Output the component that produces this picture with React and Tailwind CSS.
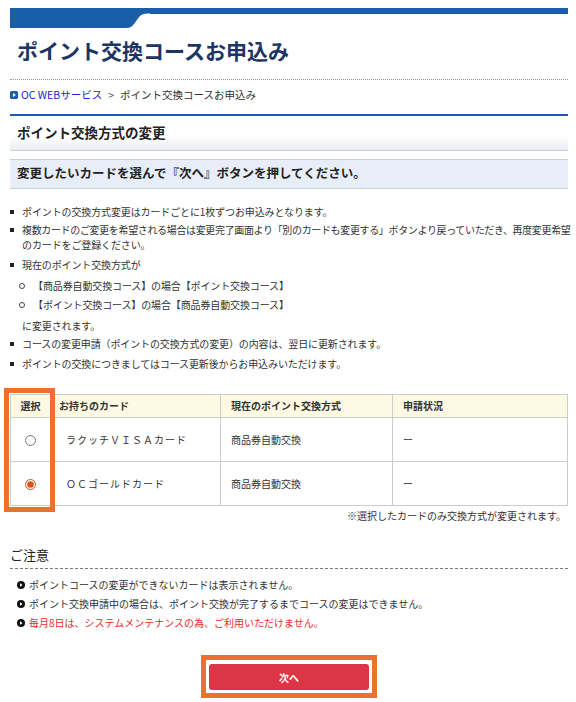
import React from 'react';

const notes = [
  'ポイントの交換方式変更はカードごとに1枚ずつお申込みとなります。',
];

const cards = [
  { name: 'ラクッチＶＩＳＡカード', course: '商品券自動交換', status: 'ー', checked: false },
  { name: 'ＯＣゴールドカード', course: '商品券自動交換', status: 'ー', checked: true },
];

const Square = () => <span className="w-[4px] h-[4px] bg-[#222] mt-[6px] mr-[8px] shrink-0" />;

const Ring = () => <span className="w-[6px] h-[6px] rounded-full border border-[#444] mt-[5px] ml-[9px] mr-[8px] shrink-0" />;

const ArrowDot = () => (
  <svg width="8" height="8" viewBox="0 0 8 8" className="shrink-0 mt-[4px] mr-[4px]">
    <circle cx="4" cy="4" r="4" fill="#111" />
    <path d="M3 2.2 L5.6 4 L3 5.8 Z" fill="#fff" />
  </svg>
);

const App = () => {
  return (
    <div className="w-[576px] bg-white pl-[10px] pr-[8px] text-[#333] font-['Noto_Sans_CJK_JP','Liberation_Sans',sans-serif]">
      {/* header bar */}
      <div className="flex items-start pt-[8px]">
        <svg width="140" height="20" viewBox="0 0 140 20" className="shrink-0 block">
          <path d="M0 0 H140 V5.5 H139 C134 5.5 132 6 129 9 L124 16 C121 19.5 120 20 115 20 H0 Z" fill="#1a5ea8" />
        </svg>
        <div className="flex-1 h-[5.5px] bg-[#1a5ea8]" />
      </div>

      <h1 className="mt-[7px] pl-[7px] h-[30px] leading-[30px] text-[21px] font-bold text-[#1c3563]">ポイント交換コースお申込み</h1>

      <div className="mt-[14px] border-t border-dotted border-[#999]" />

      <div className="pt-[7px] h-[23px] flex items-center text-[10.5px] leading-[16px]">
        <svg width="8" height="8" viewBox="0 0 8 8" className="shrink-0 mr-[3px]">
          <rect width="8" height="8" rx="1.5" fill="#1a5ea8" />
          <path d="M3 2 L5.8 4 L3 6 Z" fill="#fff" />
        </svg>
        <span className="text-[#2020d8]">OC WEBサービス</span>
        <span className="mx-[6px] text-[#444]">&gt;</span>
        <span>ポイント交換コースお申込み</span>
      </div>

      <div className="mt-[11px] h-[1.5px] bg-[#1a5ea8]" />

      <div className="h-[35px] pl-[7px] flex items-center text-[13.5px] font-bold text-[#222] bg-gradient-to-b from-white from-60% to-[#e9ecf1] border-b border-[#cfd4dc]">
        ポイント交換方式の変更
      </div>

      <div className="mt-[8px] h-[30px] pl-[7px] flex items-center text-[12.5px] font-bold text-[#222] bg-[#e8eef7] border-y border-[#c6cfdc]">
        変更したいカードを選んで『次へ』ボタンを押してください。
      </div>

      <ul className="mt-[15px] text-[10px] leading-[15px] tracking-[-0.12px]">
        {notes.map((n) => (
          <li key={n} className="flex mb-[3px]"><Square />{n}</li>
        ))}
        <li className="flex mb-[5px]">
          <Square />
          <span>
            <span className="whitespace-nowrap tracking-[-0.35px]">複数カードのご変更を希望される場合は変更完了画面より「別のカードも変更する」ボタンより戻っていただき、再度変更希望</span>
            <br />のカードをご登録ください。
          </span>
        </li>
        <li className="flex mb-[6px]"><Square />現在のポイント交換方式が</li>
        <li>
          <ul>
            <li className="flex mb-[4px]"><Ring />【商品券自動交換コース】の場合【ポイント交換コース】</li>
            <li className="flex mb-[6px]"><Ring />【ポイント交換コース】の場合【商品券自動交換コース】</li>
          </ul>
          <div className="pl-[12px] mb-[3px]">に変更されます。</div>
        </li>
        <li className="flex mb-[5px]"><Square />コースの変更申請（ポイントの交換方式の変更）の内容は、翌日に更新されます。</li>
        <li className="flex"><Square />ポイントの交換につきましてはコース更新後からお申込みいただけます。</li>
      </ul>

      <div className="relative mt-[23px]">
        <table className="w-full border-collapse text-[10px] text-[#333]">
          <thead>
            <tr className="bg-[#fdf9e2] h-[23px] font-bold">
              <th className="w-[40px] border border-[#cccccc] text-center font-bold">選択</th>
              <th className="w-[170px] border border-[#cccccc] text-left pl-[8px] font-bold">お持ちのカード</th>
              <th className="w-[172px] border border-[#cccccc] text-left pl-[10px] font-bold">現在のポイント交換方式</th>
              <th className="border border-[#cccccc] text-left pl-[10px] font-bold">申請状況</th>
            </tr>
          </thead>
          <tbody>
            {cards.map((c) => (
              <tr key={c.name} className="h-[44px]">
                <td className="border border-[#cccccc] text-center">
                  <input type="radio" name="card" defaultChecked={c.checked} className="w-[11px] h-[11px] align-middle accent-[#d9531e]" />
                </td>
                <td className="border border-[#cccccc] pl-[15px] tracking-[1px]">{c.name}</td>
                <td className="border border-[#cccccc] pl-[10px]">{c.course}</td>
                <td className="border border-[#cccccc] pl-[10px]">{c.status}</td>
              </tr>
            ))}
          </tbody>
        </table>
        <div className="absolute left-[-6px] top-[-6px] w-[51px] h-[124px] border-[5px] border-[#ec7030]" />
      </div>

      <p className="mt-[3px] text-right text-[10px] leading-[14px] pr-[2px]">※選択したカードのみ交換方式が変更されます。</p>

      <h2 className="mt-[23px] h-[18px] leading-[18px] text-[13px] text-[#222]">ご注意</h2>
      <div className="mt-[4px] border-t border-dashed border-[#777]" />

      <ul className="mt-[8px] pl-[7px] text-[10px] leading-[15px] flex flex-col gap-[4px]">
        <li className="flex"><ArrowDot />ポイントコースの変更ができないカードは表示されません。</li>
        <li className="flex"><ArrowDot />ポイント交換申請中の場合は、ポイント交換が完了するまでコースの変更はできません。</li>
        <li className="flex text-[#ee2a2a]"><ArrowDot />毎月8日は、システムメンテナンスの為、ご利用いただけません。</li>
      </ul>

      <div className="mt-[25px] flex justify-center">
        <div className="border-[5px] border-[#ec7030] p-[3px]">
          <button className="w-[160px] h-[26px] rounded-[3px] bg-[#dc3545] text-white text-[10px] font-bold">次へ</button>
        </div>
      </div>
    </div>
  );
};

export default App;
